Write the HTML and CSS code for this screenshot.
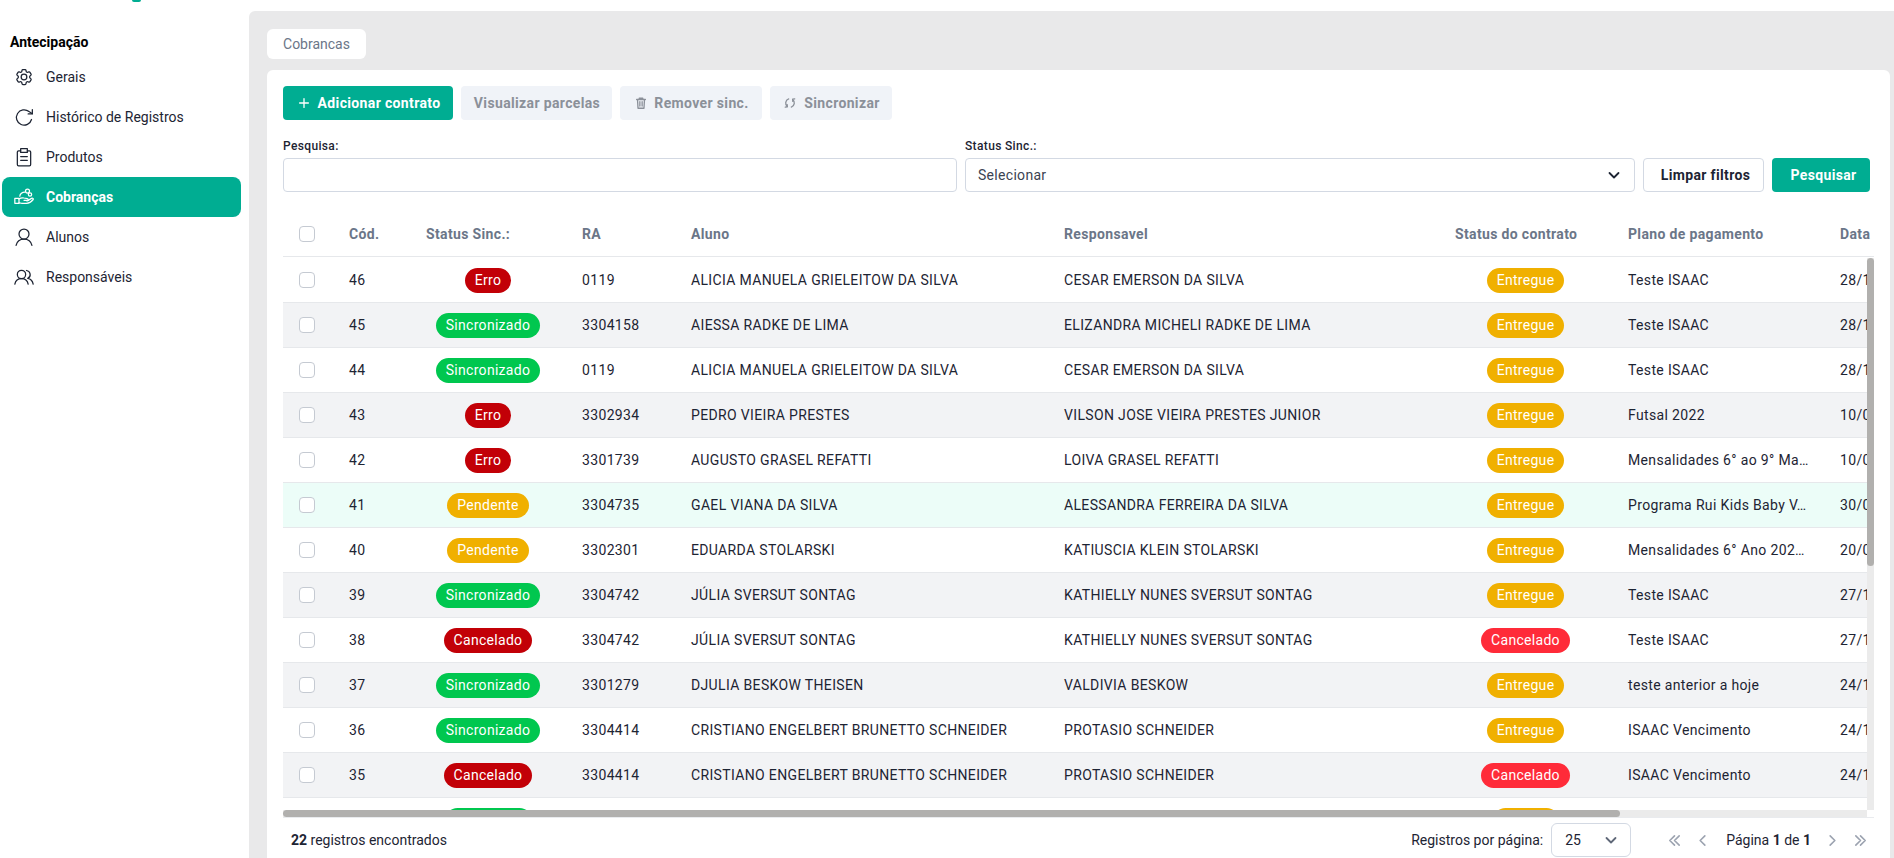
FILE: index.html
```html
<!DOCTYPE html>
<html lang="pt-BR">
<head>
<meta charset="utf-8">
<title>Cobrancas</title>
<link rel="stylesheet" href="styles.css">
</head>
<body>
<div class="app">
  <aside class="sidebar">
    <div class="logo-remnant"></div>
    <h2 class="side-title">Antecipação</h2>
    <nav class="side-nav">
      <a class="side-item"><svg class="side-icon" viewBox="0 0 24 24"><path d="M9.594 3.94c.09-.542.56-.94 1.11-.94h2.593c.55 0 1.02.398 1.11.94l.213 1.281c.063.374.313.686.645.87.074.04.147.083.22.127.325.196.72.257 1.075.124l1.217-.456a1.125 1.125 0 0 1 1.37.49l1.296 2.247a1.125 1.125 0 0 1-.26 1.431l-1.003.827c-.293.241-.438.613-.43.992a7.723 7.723 0 0 1 0 .255c-.008.378.137.75.43.991l1.004.827c.424.35.534.955.26 1.43l-1.298 2.247a1.125 1.125 0 0 1-1.369.491l-1.217-.456c-.355-.133-.75-.072-1.076.124a6.47 6.47 0 0 1-.22.128c-.331.183-.581.495-.644.869l-.213 1.281c-.09.543-.56.94-1.11.94h-2.594c-.55 0-1.019-.398-1.11-.94l-.213-1.281c-.062-.374-.312-.686-.644-.87a6.52 6.52 0 0 1-.22-.127c-.325-.196-.72-.257-1.076-.124l-1.217.456a1.125 1.125 0 0 1-1.369-.49l-1.297-2.247a1.125 1.125 0 0 1 .26-1.431l1.004-.827c.292-.24.437-.613.43-.991a6.932 6.932 0 0 1 0-.255c.007-.38-.138-.751-.43-.992l-1.004-.827a1.125 1.125 0 0 1-.26-1.43l1.297-2.247a1.125 1.125 0 0 1 1.37-.491l1.216.456c.356.133.751.072 1.076-.124.072-.044.146-.086.22-.128.332-.183.582-.495.644-.869l.214-1.28Z"/><circle cx="12" cy="12" r="3.4"/></svg>Gerais</a>
      <a class="side-item"><svg class="side-icon" viewBox="0 0 24 24"><path d="M21 15a9.200 9.200 0 1 1-3-9.500L22 8"/><path d="M22 3v5.300h-5"/></svg>Histórico de Registros</a>
      <a class="side-item"><svg class="side-icon" viewBox="0 0 24 24"><path d="M8 4.500H5.500a1.500 1.500 0 0 0-1.500 1.500v15a1.500 1.500 0 0 0 1.500 1.500h13a1.500 1.500 0 0 0 1.500-1.500V6a1.500 1.500 0 0 0-1.500-1.500H16"/><path d="M8 2h8v4.500H8z"/><path d="M8 11.500h8M8 16h8"/></svg>Produtos</a>
      <a class="side-item side-item-active"><svg class="side-icon" viewBox="0 0 24 24"><path d="M1 13.500h5v6H1z"/><path d="M6 19l3 .5h6c3 0 6-2 8-4.500.5-1-.5-2-2-1.300l-4 2.300h-5"/><path d="M6 14.500c2-1.500 4-1.800 6-1.300l4 .8c1.500.4 1.500 2.700-.5 2.700"/><path d="M7 11c0-2.500 3-5 6-5"/><circle cx="16.200" cy="4.800" r="2.400"/><circle cx="19.200" cy="9" r="2"/></svg>Cobranças</a>
      <a class="side-item"><svg class="side-icon" viewBox="0 0 24 24"><circle cx="12" cy="8.500" r="6"/><path d="M2.500 22c1-4.500 4.500-7.500 9.500-7.500s8.500 3 9.500 7.500"/></svg>Alunos</a>
      <a class="side-item"><svg class="side-icon" viewBox="0 0 24 24"><circle cx="9" cy="9" r="5"/><path d="M1 20.500c.8-3.800 3.800-6.500 8-6.500s7.200 2.700 8 6.500"/><path d="M15 4.200a5 5 0 0 1 1.500 9.500c3.500.6 5.800 3.200 6.500 6.800"/></svg>Responsáveis</a>
    </nav>
  </aside>

  <main class="panel">
    <div class="tab">Cobrancas</div>
    <section class="card">
      <div class="actions">
        <button class="btn btn-primary btn-add"><svg class="btn-icon" viewBox="0 0 16 16"><path d="M8 3v10M3 8h10"/></svg>Adicionar contrato</button>
        <button class="btn btn-muted btn-view">Visualizar parcelas</button>
        <button class="btn btn-muted btn-remove"><svg class="btn-icon" viewBox="0 0 16 16"><path d="M3 4h10M6 4V2.500h4V4M4 4l.6 10h6.800L12 4M6.700 6.500v5M9.300 6.500v5"/></svg>Remover sinc.</button>
        <button class="btn btn-muted btn-sync"><svg class="btn-icon" viewBox="0 0 16 16"><path d="M6.500 3.300A5 5 0 0 0 5 12M9.500 12.700A5 5 0 0 0 11 4M4.800 9.800 5 12.300l-2.400.4M11.200 6.200 11 3.700l2.400-.4"/></svg>Sincronizar</button>
      </div>

      <div class="filters">
        <div class="field">
          <label class="field-label">Pesquisa:</label>
          <input class="text-input" type="text">
        </div>
        <div class="field">
          <label class="field-label">Status Sinc.:</label>
          <div class="select-box"><span>Selecionar</span><svg class="chev" viewBox="0 0 16 16"><path d="M3.500 6 8 10.500 12.500 6"/></svg></div>
        </div>
        <button class="btn btn-outline">Limpar filtros</button>
        <button class="btn btn-primary btn-search">Pesquisar</button>
      </div>

      <div class="table-area">
        <div class="head-wrap">
          <table class="grid">
            <colgroup><col class="c-cb"><col class="c-cod"><col class="c-sync"><col class="c-ra"><col class="c-aluno"><col class="c-resp"><col class="c-status"><col class="c-plano"><col class="c-data"></colgroup>
            <thead><tr>
              <th><span class="check"></span></th><th>Cód.</th><th>Status Sinc.:</th><th>RA</th><th>Aluno</th><th>Responsavel</th><th>Status do contrato</th><th>Plano de pagamento</th><th>Data</th>
            </tr></thead>
          </table>
        </div>
        <div class="body-scroll">
          <table class="grid">
            <colgroup><col class="c-cb"><col class="c-cod"><col class="c-sync"><col class="c-ra"><col class="c-aluno"><col class="c-resp"><col class="c-status"><col class="c-plano"><col class="c-data"></colgroup>
            <tbody>
              <tr><td><span class="check"></span></td><td>46</td><td class="center"><span class="badge b-darkred">Erro</span></td><td>0119</td><td>ALICIA MANUELA GRIELEITOW DA SILVA</td><td>CESAR EMERSON DA SILVA</td><td class="center"><span class="badge b-amber">Entregue</span></td><td>Teste ISAAC</td><td>28/1</td></tr>
              <tr class="alt"><td><span class="check"></span></td><td>45</td><td class="center"><span class="badge b-green">Sincronizado</span></td><td>3304158</td><td>AIESSA RADKE DE LIMA</td><td>ELIZANDRA MICHELI RADKE DE LIMA</td><td class="center"><span class="badge b-amber">Entregue</span></td><td>Teste ISAAC</td><td>28/1</td></tr>
              <tr><td><span class="check"></span></td><td>44</td><td class="center"><span class="badge b-green">Sincronizado</span></td><td>0119</td><td>ALICIA MANUELA GRIELEITOW DA SILVA</td><td>CESAR EMERSON DA SILVA</td><td class="center"><span class="badge b-amber">Entregue</span></td><td>Teste ISAAC</td><td>28/1</td></tr>
              <tr class="alt"><td><span class="check"></span></td><td>43</td><td class="center"><span class="badge b-darkred">Erro</span></td><td>3302934</td><td>PEDRO VIEIRA PRESTES</td><td>VILSON JOSE VIEIRA PRESTES JUNIOR</td><td class="center"><span class="badge b-amber">Entregue</span></td><td>Futsal 2022</td><td>10/0</td></tr>
              <tr><td><span class="check"></span></td><td>42</td><td class="center"><span class="badge b-darkred">Erro</span></td><td>3301739</td><td>AUGUSTO GRASEL REFATTI</td><td>LOIVA GRASEL REFATTI</td><td class="center"><span class="badge b-amber">Entregue</span></td><td>Mensalidades 6° ao 9° Ma…</td><td>10/0</td></tr>
              <tr class="mint"><td><span class="check"></span></td><td>41</td><td class="center"><span class="badge b-amber">Pendente</span></td><td>3304735</td><td>GAEL VIANA DA SILVA</td><td>ALESSANDRA FERREIRA DA SILVA</td><td class="center"><span class="badge b-amber">Entregue</span></td><td>Programa Rui Kids Baby V…</td><td>30/0</td></tr>
              <tr><td><span class="check"></span></td><td>40</td><td class="center"><span class="badge b-amber">Pendente</span></td><td>3302301</td><td>EDUARDA STOLARSKI</td><td>KATIUSCIA KLEIN STOLARSKI</td><td class="center"><span class="badge b-amber">Entregue</span></td><td>Mensalidades 6° Ano 202…</td><td>20/0</td></tr>
              <tr class="alt"><td><span class="check"></span></td><td>39</td><td class="center"><span class="badge b-green">Sincronizado</span></td><td>3304742</td><td>JÚLIA SVERSUT SONTAG</td><td>KATHIELLY NUNES SVERSUT SONTAG</td><td class="center"><span class="badge b-amber">Entregue</span></td><td>Teste ISAAC</td><td>27/1</td></tr>
              <tr><td><span class="check"></span></td><td>38</td><td class="center"><span class="badge b-darkred">Cancelado</span></td><td>3304742</td><td>JÚLIA SVERSUT SONTAG</td><td>KATHIELLY NUNES SVERSUT SONTAG</td><td class="center"><span class="badge b-red">Cancelado</span></td><td>Teste ISAAC</td><td>27/1</td></tr>
              <tr class="alt"><td><span class="check"></span></td><td>37</td><td class="center"><span class="badge b-green">Sincronizado</span></td><td>3301279</td><td>DJULIA BESKOW THEISEN</td><td>VALDIVIA BESKOW</td><td class="center"><span class="badge b-amber">Entregue</span></td><td>teste anterior a hoje</td><td>24/1</td></tr>
              <tr><td><span class="check"></span></td><td>36</td><td class="center"><span class="badge b-green">Sincronizado</span></td><td>3304414</td><td>CRISTIANO ENGELBERT BRUNETTO SCHNEIDER</td><td>PROTASIO SCHNEIDER</td><td class="center"><span class="badge b-amber">Entregue</span></td><td>ISAAC Vencimento</td><td>24/1</td></tr>
              <tr class="alt"><td><span class="check"></span></td><td>35</td><td class="center"><span class="badge b-darkred">Cancelado</span></td><td>3304414</td><td>CRISTIANO ENGELBERT BRUNETTO SCHNEIDER</td><td>PROTASIO SCHNEIDER</td><td class="center"><span class="badge b-red">Cancelado</span></td><td>ISAAC Vencimento</td><td>24/1</td></tr>
              <tr class="peek"><td></td><td></td><td class="center"><span class="badge b-green badge-empty"></span></td><td></td><td></td><td></td><td class="center"><span class="badge b-amber badge-empty-short"></span></td><td></td><td></td></tr>
            </tbody>
          </table>
        </div>
        <div class="vbar"><div class="vbar-thumb"></div></div>
        <div class="hbar"><div class="hbar-thumb"></div></div>
      </div>

      <footer class="table-foot">
        <div class="count"><strong>22</strong> registros encontrados</div>
        <div class="pager">
          <span class="pager-label">Registros por página:</span>
          <div class="page-size"><span>25</span><svg class="chev chev-soft" viewBox="0 0 16 16"><path d="M3.500 6 8 10.500 12.500 6"/></svg></div>
          <div class="pager-nav">
            <svg class="pg pg-first" viewBox="0 0 16 16"><path d="M8 3 3 8l5 5M13 3 8 8l5 5"/></svg>
            <svg class="pg pg-prev" viewBox="0 0 16 16"><path d="M10.500 3 5.500 8l5 5"/></svg>
            <span class="page-text">Página <b>1</b> de <b>1</b></span>
            <svg class="pg pg-next" viewBox="0 0 16 16"><path d="M5.500 3l5 5-5 5"/></svg>
            <svg class="pg pg-last" viewBox="0 0 16 16"><path d="M3 3l5 5-5 5M8 3l5 5-5 5"/></svg>
          </div>
        </div>
      </footer>
    </section>
  </main>
</div>
</body>
</html>
```

FILE: styles.css
```css
* { box-sizing: border-box; }
html, body { margin: 0; height: 100%; overflow: hidden; background: #fff; }
body { font-family: Roboto, "Liberation Sans", sans-serif; font-size: 14px; color: #1d2433; }

.app { display: flex; height: 858px; position: relative; }

/* Sidebar */
.sidebar { width: 249px; flex: none; padding: 32px 8px 0 2px; background: #fff; }
.logo-remnant { position: absolute; left: 132px; top: 0; width: 9px; height: 2px; background: #00ad92; border-radius: 0 0 3px 3px; }
.side-title { margin: 0 0 5px 8px; font-size: 14px; line-height: 20px; font-weight: 700; color: #000; }
.side-nav { display: flex; flex-direction: column; }
.side-item { display: flex; align-items: center; gap: 12px; height: 40px; padding-left: 12px; border-radius: 8px; font-size: 14px; color: #1d2433; }
.side-item-active { background: #00ad92; color: #fff; font-weight: 700; }
.side-icon { width: 20px; height: 20px; flex: none; fill: none; stroke: currentColor; stroke-width: 1.5; stroke-linecap: round; stroke-linejoin: round; }

/* Panel */
.panel { flex: 1; min-width: 0; margin-top: 11px; padding: 18px 4px 0 18px; background: #e9e9ea; border-radius: 6px 0 0 0; display: flex; flex-direction: column; align-items: stretch; }
.tab { align-self: flex-start; width: 99px; height: 30px; line-height: 30px; text-align: center; background: #fff; border-radius: 6px; color: #6b7688; font-size: 14px; margin-bottom: 11px; }
.card { flex: 1; min-height: 0; background: #fff; border-radius: 6px 6px 0 0; padding: 16px 19px 0 16px; display: flex; flex-direction: column; }

/* Buttons */
.actions { display: flex; gap: 8px; margin-bottom: 18px; }
.btn { height: 34px; border: 0; border-radius: 4px; font-family: inherit; font-size: 14px; font-weight: 700; letter-spacing: .35px; display: inline-flex; align-items: center; justify-content: center; padding: 0; white-space: nowrap; }
.btn-primary { background: #00ad92; color: #fff; }
.btn-muted { background: #f0f3f8; color: #8b9099; }
.btn-outline { background: #fff; border: 1px solid #d3d9e3; color: #1d2433; align-self: end; padding-left: 4px; }
.btn-search { align-self: end; padding-left: 5px; }
.btn-add { width: 170px; gap: 7px; padding-left: 1px; }
.btn-view { width: 151px; padding-left: 1px; }
.btn-remove { width: 142px; gap: 6px; padding-left: 1px; }
.btn-sync { width: 122px; gap: 7px; padding-left: 1px; }
.btn-icon { width: 14px; height: 14px; fill: none; stroke: currentColor; stroke-width: 1.5; stroke-linecap: round; stroke-linejoin: round; flex: none; }

/* Filters */
.filters { display: grid; grid-template-columns: 674px 670px 121px 98px; column-gap: 8px; margin-bottom: 19px; }
.field { display: flex; flex-direction: column; }
.field-label { font-size: 12px; line-height: 16px; font-weight: 500; letter-spacing: .35px; margin-bottom: 4px; color: #1d2433; }
.text-input, .select-box { height: 34px; border: 1px solid #d3d9e3; border-radius: 4px; background: #fff; }
.text-input { width: 100%; padding: 0 12px; font: inherit; outline: 0; }
.select-box { display: flex; align-items: center; justify-content: space-between; padding: 0 12px; color: #3b4352; letter-spacing: .3px; }
.chev { width: 16px; height: 16px; fill: none; stroke: #1d2433; stroke-width: 1.8; stroke-linecap: round; stroke-linejoin: round; flex: none; }
.chev-soft { stroke: #5f6878; }

/* Table */
.table-area { flex: 1; min-height: 0; margin-right: -3px; display: flex; flex-direction: column; position: relative; }
.head-wrap { overflow: hidden; flex: none; margin-bottom: 1px; }
.body-scroll { flex: 1; min-height: 0; overflow: hidden; }
.vbar { position: absolute; right: 0; top: 47px; bottom: 7px; width: 7px; background: #ebebeb; }
.vbar-thumb { height: 308px; background: #b1b0ae; border-radius: 4px; }
.hbar { position: absolute; left: 0; right: 7px; bottom: 0; height: 7px; background: #ebebeb; }
.hbar-thumb { width: 1337px; height: 7px; background: #b1b0ae; border-radius: 4px; }
.grid { table-layout: fixed; width: 1877px; border-collapse: separate; border-spacing: 0; }
.c-cb { width: 50px; } .c-cod { width: 77px; } .c-sync { width: 156px; } .c-ra { width: 109px; } .c-aluno { width: 373px; }
.c-resp { width: 391px; } .c-status { width: 173px; } .c-plano { width: 212px; } .c-data { width: 336px; }
.grid th { height: 46px; padding: 0 16px; text-align: left; font-size: 14px; font-weight: 700; letter-spacing: .35px; color: #6b7688; border-bottom: 1px solid #e6e8eb; white-space: nowrap; }
.grid td { height: 45px; padding: 0 16px; border-bottom: 1px solid #e6e8eb; white-space: nowrap; overflow: hidden; letter-spacing: .35px; }
.grid td.center { text-align: center; overflow: visible; }
.grid tr.alt td { background: #f2f3f5; }
.grid tr.mint td { background: #ecfdf8; }
.check { display: block; width: 16px; height: 16px; background: #fff; border: 1px solid #c5cad2; border-radius: 4px; }

.badge { display: inline-block; height: 25px; line-height: 25px; padding: 0 10px; border-radius: 13px; color: #fff; font-size: 14px; letter-spacing: .3px; vertical-align: middle; }
.badge-empty { width: 87px; }
.badge-empty-short { width: 66px; }
.b-darkred { background: #c20007; }
.b-red { background: #ff2b39; }
.b-green { background: #00c74f; }
.b-amber { background: #f0b000; }

/* Footer */
.table-foot { flex: none; height: 41px; margin-right: -3px; border-top: 1px solid #e9ebee; padding: 5px 0 0 8px; display: flex; justify-content: space-between; align-items: flex-start; }
.count { line-height: 34px; color: #1d2433; }
.count strong { font-weight: 700; }
.pager { display: flex; align-items: center; height: 34px; }
.pager-label { margin-right: 8px; }
.page-size { width: 80px; height: 34px; border: 1px solid #d3d9e3; border-radius: 6px; display: flex; align-items: center; justify-content: space-between; padding: 0 11px 0 13px; }
.pager-nav { display: flex; align-items: center; margin-left: 36px; padding-right: 6px; }
.pg { width: 15px; height: 15px; flex: none; fill: none; stroke: #9ca3b0; stroke-width: 1.7; stroke-linecap: round; stroke-linejoin: round; }
.pg-first { margin-right: 13px; }
.pg-prev { margin-right: 16px; }
.page-text { margin-right: 14px; }
.page-text b { font-weight: 700; }
.pg-next { margin-right: 13px; }
```
